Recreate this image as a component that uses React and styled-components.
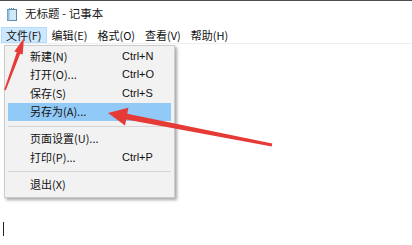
import React from "react";
import styled, { createGlobalStyle } from "styled-components";

const GlobalStyle = createGlobalStyle`
  html, body {
    margin: 0;
    padding: 0;
    background: #fff;
  }
  body {
    font-family: "Noto Sans CJK SC", "Noto Sans", sans-serif;
    color: #111;
  }
`;

const Window = styled.div`
  position: relative;
  width: 412px;
  height: 245px;
  overflow: hidden;
  display: flex;
  flex-direction: column;
  background: #fff;
  border-top: 1px solid #4d4d4d;
  box-sizing: border-box;
`;

const TitleBar = styled.div`
  height: 26px;
  display: flex;
  align-items: center;
  gap: 7px;
  padding-left: 6px;
  font-size: 11.5px;
  line-height: 1;
  color: #1a1a1a;
`;

const MenuBar = styled.div`
  height: 16px;
  display: flex;
  align-items: stretch;
  padding-left: 1px;
  border-bottom: 1px solid #efefef;
`;

const MenuButton = styled.div`
  display: flex;
  align-items: center;
  padding: 0 4px;
  font-size: 11px;
  line-height: 1;
  background: ${(p) => (p.$open ? "#cce8ff" : "transparent")};
  border: 1px solid ${(p) => (p.$open ? "#b5dcfb" : "transparent")};
  box-sizing: border-box;
`;

const Editor = styled.div`
  flex: 1;
  display: flex;
  flex-direction: column;
  justify-content: flex-end;
  padding: 0 0 9px 3px;
`;

const Caret = styled.span`
  width: 1px;
  height: 14px;
  background: #222;
`;

const Dropdown = styled.div`
  position: absolute;
  left: 4px;
  top: 44px;
  width: 171px;
  padding: 1px 0 3px;
  background: #f2f2f2;
  border: 1px solid #cccccc;
  box-shadow: 2px 2px 3px rgba(0, 0, 0, 0.35);
  box-sizing: border-box;
`;

const Row = styled.div`
  height: 18.5px;
  margin: 0 3px;
  padding-left: 22px;
  display: grid;
  grid-template-columns: 92px 1fr;
  align-items: center;
  font-size: 11px;
  line-height: 1;
  white-space: nowrap;
  background: ${(p) => (p.$active ? "#91c9f7" : "transparent")};
`;

const Separator = styled.div`
  height: 1px;
  margin: 4.5px 3px 3px;
  background: #d5d5d5;
`;

const Shortcut = styled.span`
  font-family: "Liberation Sans", "Noto Sans", sans-serif;
  font-size: 11px;
`;

const Overlay = styled.svg`
  position: absolute;
  left: 0;
  top: 0;
  width: 412px;
  height: 245px;
  pointer-events: none;
`;

function NotepadIcon() {
  return (
    <svg width="12" height="13" viewBox="0 0 12 13">
      <rect x="1.5" y="1.5" width="9" height="11" fill="#cfe9f7" stroke="#5b8aa8" />
      <rect x="1.5" y="1.5" width="2" height="11" fill="#8fbfdc" />
      <line x1="3" y1="0.5" x2="9" y2="0.5" stroke="#5b8aa8" strokeDasharray="1 1" />
    </svg>
  );
}

const menus = [
  { label: "文件(F)", open: true },
  { label: "编辑(E)" },
  { label: "格式(O)" },
  { label: "查看(V)" },
  { label: "帮助(H)" },
];

const fileItems = [
  { label: "新建(N)", key: "Ctrl+N" },
  { label: "打开(O)...", key: "Ctrl+O" },
  { label: "保存(S)", key: "Ctrl+S" },
  { label: "另存为(A)...", active: true },
  "sep",
  { label: "页面设置(U)..." },
  { label: "打印(P)...", key: "Ctrl+P" },
  "sep",
  { label: "退出(X)" },
];

export default function App() {
  return (
    <>
      <GlobalStyle />
      <Window>
        <TitleBar>
          <NotepadIcon />
          <span>无标题 - 记事本</span>
        </TitleBar>
        <MenuBar>
          {menus.map((m) => (
            <MenuButton key={m.label} $open={m.open}>
              {m.label}
            </MenuButton>
          ))}
        </MenuBar>
        <Editor>
          <Caret />
        </Editor>

        <Dropdown>
          {fileItems.map((it, i) =>
            it === "sep" ? (
              <Separator key={i} />
            ) : (
              <Row key={i} $active={it.active}>
                <span>{it.label}</span>
                {it.key && <Shortcut>{it.key}</Shortcut>}
              </Row>
            )
          )}
        </Dropdown>

        <Overlay viewBox="0 0 412 245">
          <polygon
            fill="#e63a36"
            points="4.2,88.8 16.8,51.3 14.3,50.4 24,37 22.7,53.6 20.2,52.7 5.8,89.2"
          />
          <polygon
            fill="#e63a36"
            points="108,112 128.4,106.8 127.2,112.8 272.3,142.6 271.7,145.4 126.2,118.4 125,124.4"
          />
        </Overlay>
      </Window>
    </>
  );
}
